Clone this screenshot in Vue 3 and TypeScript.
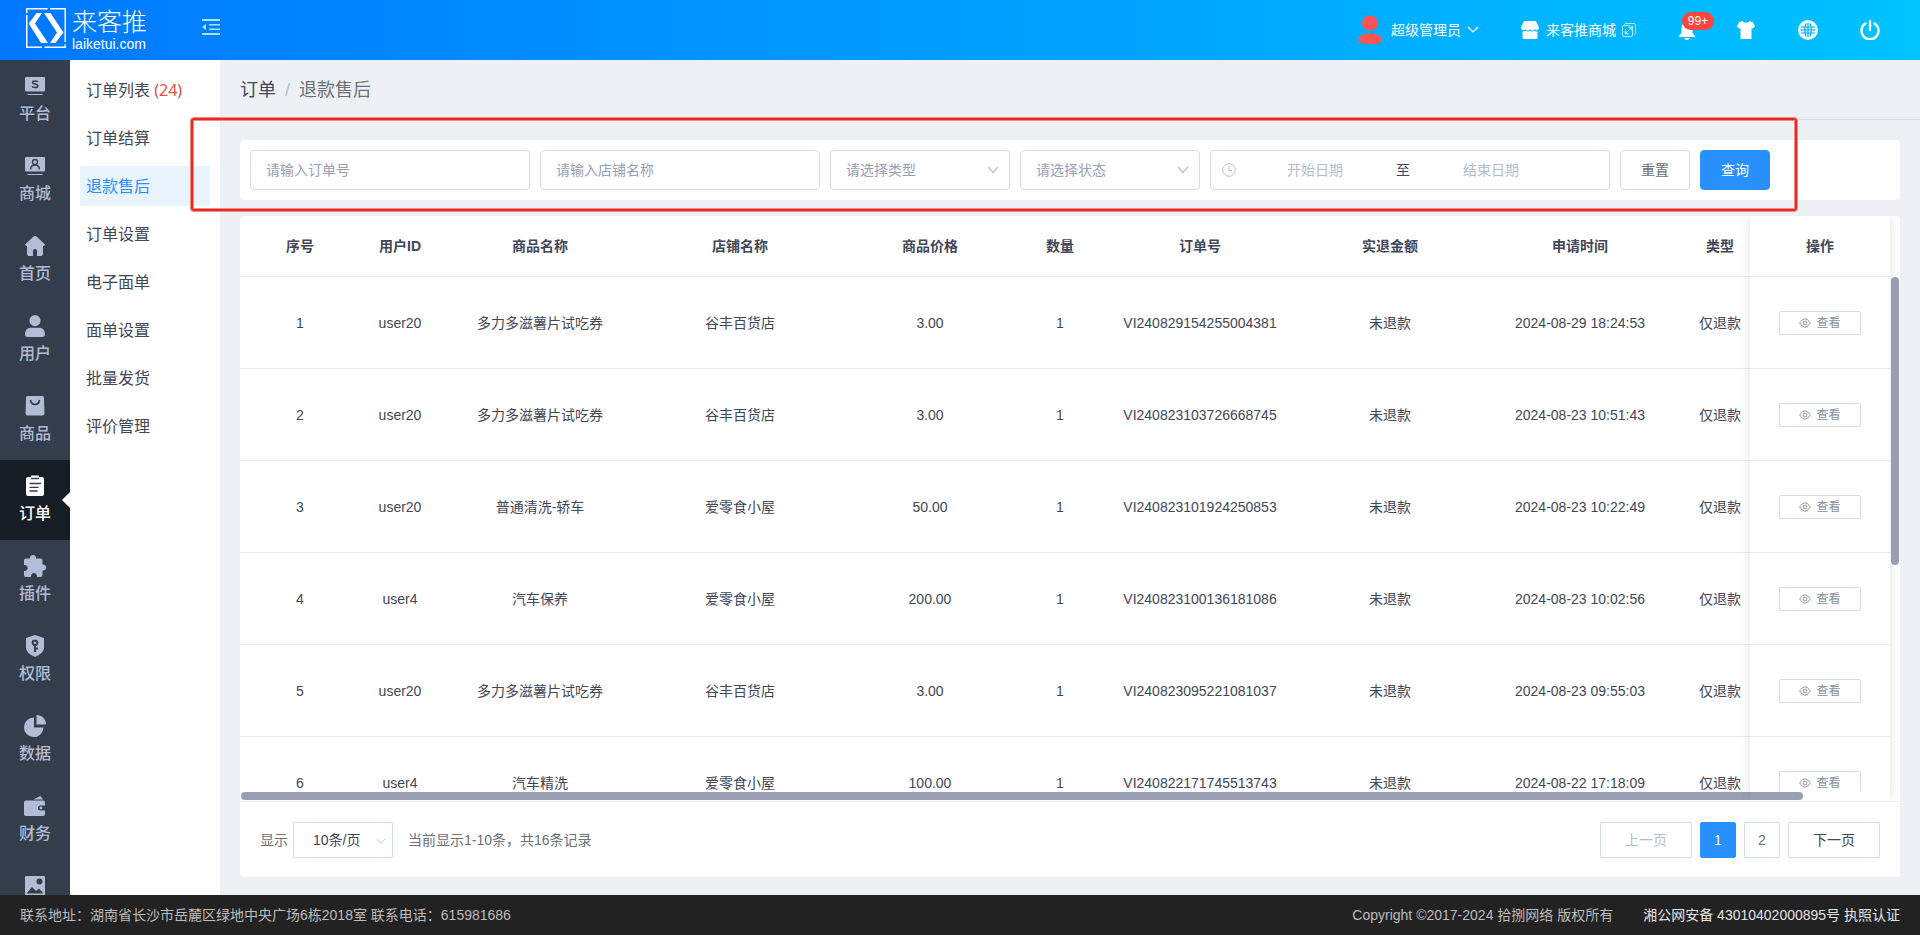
<script setup lang="ts">
import { ref } from 'vue'

interface NavItem {
  label: string
  icon: string
}

interface RefundRow {
  id: number
  user: string
  goods: string
  shop: string
  price: string
  count: number
  orderNo: string
  refund: string
  time: string
  type: string
}

const navItems: NavItem[] = [
  { label: '平台', icon: 'platform' },
  { label: '商城', icon: 'mall' },
  { label: '首页', icon: 'home' },
  { label: '用户', icon: 'user' },
  { label: '商品', icon: 'goods' },
  { label: '订单', icon: 'order' },
  { label: '插件', icon: 'plugin' },
  { label: '权限', icon: 'auth' },
  { label: '数据', icon: 'data' },
  { label: '财务', icon: 'finance' },
  { label: '', icon: 'image' },
]
const activeNav = ref('订单')

const subItems = ['订单列表', '订单结算', '退款售后', '订单设置', '电子面单', '面单设置', '批量发货', '评价管理']
const activeSub = ref('退款售后')

const row = (id: number, user: string, goods: string, shop: string, price: string, orderNo: string, time: string): RefundRow => ({
  id, user, goods, shop, price, count: 1, orderNo, refund: '未退款', time, type: '仅退款',
})

const rows: RefundRow[] = [
  row(1, 'user20', '多力多滋薯片试吃券', '谷丰百货店', '3.00', 'VI240829154255004381', '2024-08-29 18:24:53'),
  row(2, 'user20', '多力多滋薯片试吃券', '谷丰百货店', '3.00', 'VI240823103726668745', '2024-08-23 10:51:43'),
  row(3, 'user20', '普通清洗-轿车', '爱零食小屋', '50.00', 'VI240823101924250853', '2024-08-23 10:22:49'),
  row(4, 'user4', '汽车保养', '爱零食小屋', '200.00', 'VI240823100136181086', '2024-08-23 10:02:56'),
  row(5, 'user20', '多力多滋薯片试吃券', '谷丰百货店', '3.00', 'VI240823095221081037', '2024-08-23 09:55:03'),
  row(6, 'user4', '汽车精洗', '爱零食小屋', '100.00', 'VI240822171745513743', '2024-08-22 17:18:09'),
]

const orderNo = ref('')
const shopName = ref('')
const startDate = ref('')
const endDate = ref('')
const page = ref(1)

function reset() {
  orderNo.value = ''
  shopName.value = ''
  startDate.value = ''
  endDate.value = ''
}
</script>

<template>
  <div class="app">
    <header class="topbar">
      <a class="logo" href="#" aria-label="来客推">
        <svg width="40" height="40" viewBox="0 0 40 40">
          <path d="M.75 5V.75H21.500M24 .75H39.250V34M39.250 36.500V39.250H18.500M16 39.250H.75V7" fill="none" stroke="#fff" stroke-width="1.500" />
          <path d="M10.500 5H16L9 15.500L22 35H15L2.700 15.500ZM18 5H24.500L37.500 24.500L29.500 35H24L31 24.500Z" fill="#fff" />
        </svg>
        <span class="logo-text">
          <span class="logo-cn">来客推</span>
          <span class="logo-en">laiketui.com</span>
        </span>
      </a>
      <button class="fold" type="button" aria-label="收起菜单">
        <svg width="18" height="16" viewBox="0 0 18 16" fill="#a6e1ff">
          <path d="M0 0h18v2H0zM7 5h11v1.500H7zM7 9.500h11V11H7zM0 14h18v2H0zM4 4.800v6.400L0 8z" />
        </svg>
      </button>
      <nav class="tools">
        <a class="tool user" href="#">
          <svg width="24" height="30" viewBox="0 0 24 30" fill="#ff5454">
            <ellipse cx="12" cy="8" rx="8" ry="7.600" />
            <path d="M0 24.500C2 19.500 7 18.500 12 18.500S22 19.500 24 24.500C23.500 28 19 29 12 29S.5 28 0 24.500Z" />
          </svg>
          <span class="tool-text">超级管理员</span>
          <svg class="caret" width="12" height="8" viewBox="0 0 12 8"><path d="M1 1l5 5 5-5" fill="none" stroke="#fff" stroke-width="1.200" /></svg>
        </a>
        <a class="tool store" href="#">
          <svg width="18" height="18" viewBox="0 0 18 18" fill="#fff">
            <path d="M3 0h12l3 6.500c0 3-3.200 3.500-4.500 1.800-1 1.600-3.600 1.600-4.500 0-1 1.600-3.600 1.600-4.500 0C3.200 10 0 9.500 0 6.500Z" />
            <path d="M1.500 10.400c1.200.4 2.400.1 3.200-.6 1.300 1 3 1 4.300 0 1.300 1 3 1 4.300 0 .8.700 2 1 3.200.6V16.500q0 1.500-1.500 1.500H3q-1.500 0-1.500-1.500Z" />
          </svg>
          <span class="store-name">来客推商城</span>
          <svg width="14" height="14" viewBox="0 0 14 14" fill="none" stroke="#e0f6ff">
            <path d="M2.500 1.500Q2.800.5 4 .5H12Q13.500.5 13.500 2V10.500Q13.500 11.700 12.500 12M10.500 3V12Q10.500 13.500 9 13.500H2Q.5 13.500.5 12V3.500Q.5 2.500 2 2.500H8" opacity=".8" />
            <path d="M3.500 10.500L9.500 4.500M6.500 4.200H9.800V7.500M3.200 7.500V10.800H6.500" />
          </svg>
        </a>
        <a class="tool bell" href="#" aria-label="消息">
          <svg width="16" height="19" viewBox="0 0 16 19" fill="#fff">
            <path d="M8 0c.8 0 1.400.6 1.400 1.400C12.200 2 13.500 4.500 13.500 7v5l2.500 3v1H0v-1l2.500-3V7c0-2.500 1.300-5 4.100-5.600C6.600.6 7.200 0 8 0ZM5.200 17h5.600c-.5 1.300-1.500 2-2.800 2s-2.300-.7-2.800-2Z" />
          </svg>
          <span class="badge">99+</span>
        </a>
        <a class="tool shirt" href="#" aria-label="主题">
          <svg width="18" height="18" viewBox="0 0 18 18" fill="#fff">
            <path d="M5.500 0C6.500 2.200 11.500 2.200 12.500 0L16 1.200 18 5.500 15.500 7.500 14.500 7V18H3.500V7L2.500 7.500 0 5.500 2 1.200Z" />
          </svg>
        </a>
        <a class="tool globe" href="#" aria-label="语言">
          <svg width="20" height="20" viewBox="0 0 20 20">
            <circle cx="10" cy="10" r="10" fill="#eafaff" />
            <path d="M3 7h14M3 13h14M10 3v14M8 3.500Q5.500 10 8 16.500M12 3.500Q14.500 10 12 16.500M2.500 10h15" fill="none" stroke="#00aef5" stroke-width="1.200" />
          </svg>
        </a>
        <a class="tool power" href="#" aria-label="退出">
          <svg width="20" height="20" viewBox="0 0 20 20" fill="none" stroke="#fff" stroke-width="2.400" stroke-linecap="round">
            <path d="M10 1.300V10M5.500 3.600A8.500 8.500 0 1 0 14.500 3.600" />
          </svg>
        </a>
      </nav>
    </header>

    <div class="middle">
      <nav class="sidebar">
        <a v-for="item in navItems" :key="item.icon" href="#" class="nav-item" :class="{ active: item.label === activeNav }" :aria-label="item.icon">
          <svg class="nav-icon" width="24" height="24" viewBox="0 0 24 24" fill="currentColor">
            <template v-if="item.icon === 'platform'">
              <path d="M3 3h18q1 0 1 1v12.500q0 1-1 1H3q-1 0-1-1V4q0-1 1-1ZM4.500 20h15v1h-15z" />
              <path class="hole" d="M14.800 8c-.5-1.300-5-1.600-5.200.3-.2 2.200 5.400 1.300 5.200 3.700-.2 2.200-5.100 1.900-5.600.1" />
            </template>
            <template v-else-if="item.icon === 'mall'">
              <path d="M3 3h18q1 0 1 1v12.500q0 1-1 1H3q-1 0-1-1V4q0-1 1-1ZM4.500 20h15v1h-15z" />
              <path class="hole thin" d="M12 5.500a2.500 2.500 0 1 1 0 5 2.500 2.500 0 1 1 0-5M7.500 15.500c.2-3 2-4.500 4.500-4.500s4.300 1.500 4.500 4.500" />
            </template>
            <path v-else-if="item.icon === 'home'" d="M12 2q1 0 1.800.8L21.500 10q1 1.200-.3 1.800L20 12.300V20q0 2-2 2H14v-5.500q0-1.500-2-1.500t-2 1.500V22H6q-2 0-2-2v-7.700l-1.200-.5Q1.500 11.200 2.500 10L10.200 2.800Q11 2 12 2Z" />
            <path v-else-if="item.icon === 'user'" d="M12 1a5.600 5.600 0 1 1 0 11.200A5.600 5.600 0 1 1 12 1ZM2 20.500C2 15.500 5 13.700 8 13.700h8c3 0 6 1.800 6 6.800 0 1.500-1 2.500-2.500 2.500h-15C3 23 2 22 2 20.500Z" />
            <template v-else-if="item.icon === 'goods'">
              <path d="M4.500 2h15q1.300 0 1.400 1.300l.6 16.200q0 2-2 2h-15q-2 0-2-2L3.100 3.300Q3.200 2 4.500 2Z" />
              <path class="hole" d="M7.500 6c1 6 8 6 9 0" />
            </template>
            <template v-else-if="item.icon === 'order'">
              <path d="M5 3h14q2 0 2 2v15q0 2-2 2H5q-2 0-2-2V5q0-2 2-2ZM8 1.500h8v3H8z" />
              <path class="hole thin" d="M8 4.500h8M6.500 9.500h11.500M6.500 13.300h9M6.500 17h8" />
            </template>
            <path v-else-if="item.icon === 'plugin'" d="M10 1c2 0 3.200 1.500 3 3.500h4.500q2 0 2 2V10.500C24.500 10 24.500 17 19.500 16.500V21q0 2-2 2H14C14.500 17.500 7.500 17.500 8 23H3q-2 0-2-2V17C6 17.500 6 10.500 1 11V6.500q0-2 2-2H7C6.800 2.500 8 1 10 1Z" />
            <template v-else-if="item.icon === 'auth'">
              <path d="M12 1L21 4V14q0 5-9 9-9-4-9-9V4Z" />
              <path class="hole thick" d="M12 6.500a2.300 2.300 0 1 1 0 4.600 2.300 2.300 0 1 1 0-4.600M12 11v7M12 14.500h3" />
            </template>
            <path v-else-if="item.icon === 'data'" d="M11 3.500V13.500H20.500A9.800 9.800 0 1 1 11 3.500ZM13.500 1C19 1 23 5 23 10.500H13.500Z" />
            <template v-else-if="item.icon === 'finance'">
              <path d="M10 5.500L17.500 2 20 5.500ZM3 6.500h17q2 0 2 2v3h-4.500q-2.500 0-2.500 2.500t2.500 2.500H22v3.500q0 2-2 2H3q-2 0-2-2V8.500q0-2 2-2Z" />
              <circle cx="18" cy="14" r="1.400" />
            </template>
            <template v-else>
              <path d="M3 2h18q1 0 1 1v18q0 1-1 1H3q-1 0-1-1V3q0-1 1-1Z" />
              <path class="hole-fill" d="M16.500 4.500a3 3 0 1 1 0 6 3 3 0 1 1 0-6M3.500 19.500l5.500-6.500 4 4 3-2.500 4.500 5Z" />
            </template>
          </svg>
          <span class="nav-label">{{ item.label }}</span>
        </a>
      </nav>

      <nav class="submenu">
        <a v-for="item in subItems" :key="item" href="#" class="sub-item" :class="{ active: item === activeSub }">
          {{ item }}<span v-if="item === '订单列表'" class="sub-count"> (24)</span>
        </a>
      </nav>

      <main class="content">
        <div class="breadcrumb">
          <a href="#">订单</a><span class="slash">/</span><span class="current">退款售后</span>
        </div>

        <section class="filter-card">
          <form class="filters" @submit.prevent>
            <input v-model="orderNo" class="field text" type="text" placeholder="请输入订单号" aria-label="订单号" />
            <input v-model="shopName" class="field text" type="text" placeholder="请输入店铺名称" aria-label="店铺名称" />
            <span v-for="name in ['请选择类型', '请选择状态']" :key="name" class="select-wrap">
              <select class="field select" :aria-label="name"><option>{{ name }}</option></select>
              <svg class="arrow" width="12" height="8" viewBox="0 0 12 8"><path d="M1 1l5 5.500L11 1" fill="none" stroke="#b8bfcc" stroke-width="1.200" /></svg>
            </span>
            <span class="field range">
              <svg width="14" height="14" viewBox="0 0 14 14" fill="none" stroke="#b8bfcc"><circle cx="7" cy="7" r="6.300" /><path d="M7 3.200V7.500H10" /></svg>
              <input v-model="startDate" type="text" placeholder="开始日期" aria-label="开始日期" />
              <span class="to">至</span>
              <input v-model="endDate" type="text" placeholder="结束日期" aria-label="结束日期" />
            </span>
            <button class="btn" type="button" @click="reset">重置</button>
            <button class="btn primary" type="submit">查询</button>
            <span class="highlight"></span>
          </form>
        </section>

        <section class="table-card">
          <div class="table-area">
            <div class="table-scroll">
              <table>
                <colgroup>
                  <col class="w120" /><col class="w80" /><col class="w200" /><col class="w200" /><col class="w180" /><col class="w80" />
                  <col class="w200" /><col class="w180" /><col class="w200" /><col class="w80" /><col class="w80" /><col class="w140" />
                </colgroup>
                <thead>
                  <tr>
                    <th>序号</th><th>用户ID</th><th>商品名称</th><th>店铺名称</th><th>商品价格</th><th>数量</th>
                    <th>订单号</th><th>实退金额</th><th>申请时间</th><th>类型</th><th></th><th class="fixed">操作</th>
                  </tr>
                </thead>
                <tbody>
                  <tr v-for="r in rows" :key="r.id">
                    <td>{{ r.id }}</td>
                    <td>{{ r.user }}</td>
                    <td>{{ r.goods }}</td>
                    <td>{{ r.shop }}</td>
                    <td>{{ r.price }}</td>
                    <td>{{ r.count }}</td>
                    <td>{{ r.orderNo }}</td>
                    <td>{{ r.refund }}</td>
                    <td>{{ r.time }}</td>
                    <td>{{ r.type }}</td>
                    <td></td>
                    <td class="fixed">
                      <button class="view" type="button">
                        <svg width="12" height="10" viewBox="0 0 12 10" fill="none" stroke="#8f96a3"><path d="M.6 5Q6-3.500 11.400 5 6 13.500.6 5Z" /><circle cx="6" cy="5" r="1.900" /></svg>
                        查看
                      </button>
                    </td>
                  </tr>
                </tbody>
              </table>
            </div>
            <div class="rail-y"><div class="thumb-y"></div></div>
            <div class="rail-x"><div class="thumb-x"></div></div>
            <div class="fixed-shadow"></div>
          </div>

          <div class="pager">
            <label class="size-label" for="page-size">显示</label>
            <span class="size-wrap">
              <select id="page-size" class="size"><option>10条/页</option></select>
              <svg class="size-arrow" width="10" height="7" viewBox="0 0 10 7"><path d="M1 1l4 4.500L9 1" fill="none" stroke="#c3c9d6" /></svg>
            </span>
            <span class="summary">当前显示1-10条，共16条记录</span>
            <button class="page-btn wide" type="button" :disabled="page === 1" @click="page--">上一页</button>
            <button v-for="n in 2" :key="n" class="page-btn" :class="{ on: page === n }" type="button" @click="page = n">{{ n }}</button>
            <button class="page-btn wide" type="button" @click="page = 2">下一页</button>
          </div>
        </section>
      </main>
    </div>

    <footer class="footer">
      <span>联系地址：湖南省长沙市岳麓区绿地中央广场6栋2018室 联系电话：615981686</span>
      <span class="copyright">Copyright ©2017-2024 拾捌网络 版权所有</span>
      <a href="#">湘公网安备 43010402000895号 执照认证</a>
    </footer>
  </div>
</template>

<style>
body {
  margin: 0;
}
</style>

<style scoped>
.app {
  display: flex;
  flex-direction: column;
  height: 100vh;
  overflow: hidden;
  font-family: "Liberation Sans", "Noto Sans CJK SC", sans-serif;
  font-size: 14px;
  line-height: 20px;
  color: #414658;
  background: #edf1f5;
}
.app * {
  box-sizing: border-box;
}
a {
  color: inherit;
  text-decoration: none;
}
svg {
  display: block;
  flex: none;
}
button,
input,
select {
  font: inherit;
  color: inherit;
  margin: 0;
}
button {
  cursor: pointer;
}

.topbar {
  display: flex;
  align-items: center;
  flex: none;
  height: 60px;
  padding: 0 40px 0 26px;
  background: linear-gradient(90deg, #0078ff, #00c3ff);
}
.logo {
  display: flex;
  gap: 6px;
  color: #fff;
}
.logo-text {
  display: flex;
  flex-direction: column;
}
.logo-cn {
  font-size: 25px;
  font-weight: 300;
  line-height: 28px;
}
.logo-en {
  font-size: 14px;
  line-height: 16px;
}
.fold {
  margin-left: 48px;
  margin-top: -6px;
  padding: 0;
  border: 0;
  background: none;
}
.fold svg {
  margin-left: 7px;
}
.tools {
  display: flex;
  align-items: center;
  margin-left: auto;
  color: #fff;
}
.tool {
  display: flex;
  align-items: center;
}
.tool-text {
  margin: 0 6px 0 9px;
}
.store {
  margin-left: 42px;
}
.store-name {
  margin: 0 6px 0 7px;
}
.bell {
  position: relative;
  margin-left: 43px;
}
.badge {
  position: absolute;
  left: 3px;
  top: -9px;
  width: 32px;
  border-radius: 9px;
  background: #ff453d;
  font-size: 12px;
  line-height: 18px;
  text-align: center;
}
.shirt {
  margin-left: 42px;
}
.globe {
  margin-left: 43px;
}
.power {
  margin-left: 42px;
}

.middle {
  display: flex;
  flex: 1;
  min-height: 0;
}
.sidebar {
  flex: none;
  width: 70px;
  overflow: hidden;
  background: #343d4b;
  color: #b2bcd4;
}
.nav-item {
  position: relative;
  display: flex;
  flex-direction: column;
  align-items: center;
  gap: 4px;
  height: 80px;
  padding-top: 14px;
}
.nav-label {
  font-size: 16px;
  font-weight: 500;
  line-height: 24px;
}
.nav-item.active {
  background: #161d25;
  color: #fff;
}
.nav-item.active::after {
  content: "";
  position: absolute;
  right: 0;
  top: 32px;
  border: 8px solid transparent;
  border-left-width: 0;
  border-right-color: #fff;
}
.hole {
  fill: none;
  stroke: #343d4b;
  stroke-width: 1.6;
}
.hole.thin {
  stroke-width: 1.3;
}
.hole.thick {
  stroke-width: 2;
}
.hole-fill {
  fill: #343d4b;
}

.submenu {
  display: flex;
  flex-direction: column;
  flex: none;
  gap: 8px;
  width: 150px;
  padding: 10px;
  background: #fff;
  font-family: "Noto Sans", "Noto Sans CJK SC", sans-serif;
  font-size: 16px;
}
.sub-item {
  padding: 0 6px;
  line-height: 40px;
  border-radius: 2px;
  white-space: pre;
}
.sub-item.active {
  background: #e9f4ff;
  color: #2890ff;
}
.sub-count {
  color: #ee4b45;
}

.content {
  display: flex;
  flex-direction: column;
  flex: 1;
  min-width: 0;
}
.breadcrumb {
  flex: none;
  height: 60px;
  padding: 0 20px;
  border-bottom: 1px solid #d5dbe8;
  font-size: 18px;
  line-height: 60px;
}
.slash {
  margin: 0 9px;
  color: #b4bccb;
}
.current {
  color: #6a7076;
}

.filter-card {
  flex: none;
  margin: 20px 20px 0;
  padding: 10px;
  border-radius: 4px;
  background: #fff;
}
.filters {
  position: relative;
  display: inline-flex;
  gap: 10px;
  vertical-align: top;
}
.field {
  height: 40px;
  border: 1px solid #d5dbe8;
  border-radius: 4px;
  background: #fff;
  outline: none;
}
.field.text {
  width: 280px;
  padding: 0 15px;
}
input::placeholder {
  color: #97a0b4;
  opacity: 1;
}
.select-wrap,
.size-wrap {
  position: relative;
}
.field.select {
  width: 180px;
  padding: 0 15px;
  appearance: none;
  color: #97a0b4;
}
.arrow {
  position: absolute;
  right: 11px;
  top: 16px;
  pointer-events: none;
}
.range {
  display: flex;
  align-items: center;
  width: 400px;
  padding: 0 11px;
}
.range input {
  width: 152px;
  margin-left: 3px;
  padding: 0;
  border: 0;
  outline: none;
  text-align: center;
}
.range .to + input {
  margin-left: 0;
}
.range input::placeholder {
  color: #b4bccc;
}
.to {
  width: 24px;
  text-align: center;
}
.btn {
  width: 70px;
  padding: 0;
  border: 1px solid #d5dbe8;
  border-radius: 4px;
  background: #fff;
  color: #6a7076;
}
.btn.primary {
  border-color: #2890ff;
  background: #2890ff;
  color: #fff;
}
.highlight {
  position: absolute;
  z-index: 5;
  inset: -32px -27px -21px -59px;
  border: 2px solid #e32b22;
  border-radius: 3px;
  box-shadow: 0 0 0 1px #f58a84, inset 0 0 0 1px #f58a84;
  pointer-events: none;
}

.table-card {
  display: flex;
  flex-direction: column;
  flex: 1;
  min-height: 0;
  margin: 16px 20px 18px;
  border-radius: 4px;
  background: #fff;
  overflow: hidden;
}
.table-area {
  position: relative;
  display: grid;
  grid-template: minmax(0, 1fr) 10px / minmax(0, 1fr) 10px;
  flex: 1;
  min-height: 0;
  border-bottom: 1px solid #e9ecef;
}
.table-scroll {
  overflow: hidden;
}
table {
  width: 100%;
  min-width: 1740px;
  table-layout: fixed;
  border-collapse: separate;
  border-spacing: 0;
}
.w80 {
  width: 80px;
}
.w120 {
  width: 120px;
}
.w140 {
  width: 140px;
}
.w180 {
  width: 180px;
}
.w200 {
  width: 200px;
}
th,
td {
  padding: 0;
  border-bottom: 1px solid #e9ecef;
  text-align: center;
  white-space: nowrap;
}
th {
  height: 61px;
  font-weight: 700;
}
td {
  height: 92px;
}
.fixed {
  position: sticky;
  right: 0;
  background: #fff;
}
.view {
  display: inline-flex;
  align-items: center;
  justify-content: center;
  gap: 5px;
  width: 82px;
  height: 24px;
  padding: 0;
  border: 1px solid #d5dbe8;
  border-radius: 2px;
  background: #fff;
  color: #888f9e;
  font-size: 12px;
  vertical-align: middle;
}
.rail-y {
  z-index: 1;
  padding: 61px 1px 0;
}
.thumb-y {
  width: 8px;
  height: 56%;
  border-radius: 4px;
  background: #989fb3;
}
.rail-x {
  grid-column: 1;
  padding: 1px 1px 0;
}
.thumb-x {
  width: 94.8%;
  height: 8px;
  border-radius: 4px;
  background: #989fb3;
}
.fixed-shadow {
  position: absolute;
  top: 0;
  right: 10px;
  bottom: 0;
  width: 140px;
  box-shadow: 0 0 10px rgba(0, 0, 0, 0.12);
  clip-path: inset(0 -10px 0 -10px);
  pointer-events: none;
}

.pager {
  display: flex;
  align-items: center;
  flex: none;
  gap: 8px;
  padding: 20px 20px 19px;
}
.size-label {
  margin-right: -3px;
  color: #6a7076;
}
.size {
  width: 100px;
  height: 36px;
  padding: 0 19px;
  border: 1px solid #d5dbe8;
  border-radius: 2px;
  background: #fff;
  appearance: none;
}
.size-arrow {
  position: absolute;
  right: 7px;
  top: 16px;
  pointer-events: none;
}
.summary {
  margin: 0 auto 0 7px;
  color: #6a7076;
}
.page-btn {
  width: 36px;
  height: 36px;
  padding: 0;
  border: 1px solid #d5dbe8;
  border-radius: 2px;
  background: #fff;
  color: #6a7076;
}
.page-btn.wide {
  width: 92px;
  color: #414658;
}
.page-btn.wide:disabled {
  color: #b4bccc;
}
.page-btn.on {
  border-color: #2890ff;
  background: #2890ff;
  color: #fff;
}

.footer {
  display: flex;
  align-items: center;
  flex: none;
  gap: 30px;
  height: 40px;
  padding: 0 20px;
  background: #222;
  color: #bdbdbd;
}
.copyright {
  margin-left: auto;
}
.footer a {
  color: #e4e4e4;
}
</style>
